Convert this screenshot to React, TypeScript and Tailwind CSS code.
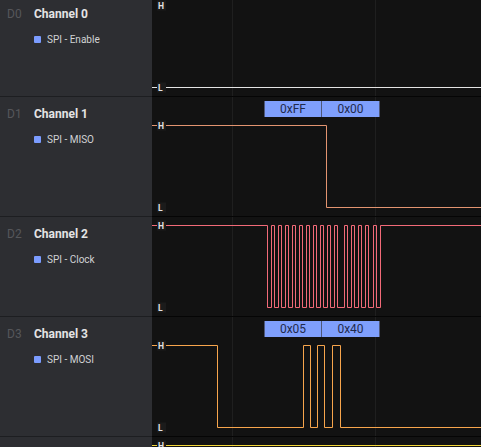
import React from 'react';

const WAVE_W = 329;
const GRID_X = [80.5, 223.5];

type Channel = {
  d: string;
  name?: string;
  proto?: string;
  h: number;
  hy: number;
  ly: number;
  color: string;
  path: string;
  labels?: string[];
};

// clock rises (waveform coords), each high for 3px
const clockRises = [119.5, 126.5, 133.5, 140.5, 147.5, 154.5, 161.5, 168.5, 175.5, 182.5, 192.5, 199.5, 206.5, 213.5, 221.5];

function clockPath() {
  let p = 'M0 8.5 H115.5 V90.5';
  clockRises.forEach((r) => {
    p += ` H${r} V8.5 H${r + 3} V90.5`;
  });
  p += ` H228.5 V8.5 H${WAVE_W}`;
  return p;
}

const channels: Channel[] = [
  { d: 'D0', name: 'Channel 0', proto: 'SPI - Enable', h: 100, hy: 8.5, ly: 90.5, color: '#e4e4e4', path: `M0 90.5 H${WAVE_W}` },
  {
    d: 'D1', name: 'Channel 1', proto: 'SPI - MISO', h: 120, hy: 28.5, ly: 110.5, color: '#e39470',
    path: `M0 28.5 H174.5 V110.5 H${WAVE_W}`, labels: ['0xFF', '0x00'],
  },
  { d: 'D2', name: 'Channel 2', proto: 'SPI - Clock', h: 100, hy: 8.5, ly: 90.5, color: '#f26a78', path: clockPath() },
  {
    d: 'D3', name: 'Channel 3', proto: 'SPI - MOSI', h: 120, hy: 28.5, ly: 110.5, color: '#f7a54c',
    path: `M0 28.5 H65.5 V110.5 H151.5 V28.5 H158.5 V110.5 H165.5 V28.5 H172.5 V110.5 H180.5 V28.5 H188.5 V110.5 H${WAVE_W}`,
    labels: ['0x05', '0x40'],
  },
  { d: 'D4', h: 100, hy: 8.5, ly: 90.5, color: '#f3d63a', path: `M0 8.5 H${WAVE_W}` },
];

function LevelTag({ y, text }: { y: number; text: string }) {
  return (
    <g>
      <rect x={5} y={y - 5} width={9} height={10} fill="#1b1b1b" />
      <text x={6} y={y + 3} fontSize={8.5} fontWeight={700} fill="#e2e2e2" fontFamily="Roboto, sans-serif">
        {text}
      </text>
    </g>
  );
}

function Waveform({ ch }: { ch: Channel }) {
  return (
    <svg width={WAVE_W} height={ch.h} className="block">
      <rect x={0} y={0} width={WAVE_W} height={ch.h} fill="#121212" />
      {GRID_X.map((x) => (
        <line key={x} x1={x} x2={x} y1={0} y2={ch.h} stroke="#1f1f1f" strokeWidth={1} />
      ))}
      <line x1={0} x2={WAVE_W} y1={ch.h - 0.5} y2={ch.h - 0.5} stroke="#050505" strokeWidth={1} />
      <path d={ch.path} fill="none" stroke={ch.color} strokeWidth={1} />
      {ch.labels && (
        <g fontFamily="Roboto, sans-serif">
          <rect x={112} y={4} width={1} height={16} fill="#4e5779" />
          <rect x={113} y={4} width={56} height={16} fill="#7f9ffc" />
          <rect x={169} y={4} width={1} height={16} fill="#4e5779" />
          <rect x={170} y={4} width={57} height={16} fill="#7f9ffc" />
          <rect x={227} y={4} width={1} height={16} fill="#4e5779" />
          <text x={141} y={16} fontSize={12} fill="#1f2a4c" textAnchor="middle">{ch.labels[0]}</text>
          <text x={198.5} y={16} fontSize={12} fill="#1f2a4c" textAnchor="middle">{ch.labels[1]}</text>
        </g>
      )}
      <LevelTag y={ch.hy} text="H" />
      <LevelTag y={ch.ly} text="L" />
    </svg>
  );
}

function ChannelRow({ ch }: { ch: Channel }) {
  return (
    <div className="flex" style={{ height: ch.h }}>
      <div className="w-[152px] shrink-0 bg-[#2d2e32] border-b border-[#1d1e21] pl-[7px] pt-[9px]">
        {ch.name && (
          <>
            <div className="flex items-center h-4">
              <span className="w-[27px] text-[12px] text-[#56575b]">{ch.d}</span>
              <span className="text-[12px] font-bold text-[#e4e4e4]">{ch.name}</span>
            </div>
            <div className="flex items-center gap-[6px] pl-[27px] mt-[10px] h-[14px]">
              <span className="w-[7px] h-[7px] rounded-[1px] bg-[#7b9cff]" />
              <span className="text-[10px] text-[#d2d3d5]">{ch.proto}</span>
            </div>
          </>
        )}
      </div>
      <Waveform ch={ch} />
    </div>
  );
}

export default function App() {
  return (
    <div className="w-[481px] h-[447px] overflow-hidden bg-[#121212]" style={{ fontFamily: 'Roboto, "Liberation Sans", sans-serif' }}>
      <div className="-mt-[3px] flex flex-col">
        {channels.map((ch) => (
          <ChannelRow key={ch.d} ch={ch} />
        ))}
      </div>
    </div>
  );
}
